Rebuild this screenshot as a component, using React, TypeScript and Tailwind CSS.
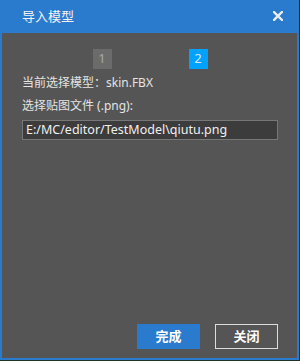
const font = { fontFamily: '"Microsoft YaHei", "Noto Sans", "Noto Sans CJK SC", sans-serif' };

const App = () => {
  return (
    <div className="w-[300px] h-[361px] bg-[#1e3326]" style={font}>
      <div className="w-[299px] h-[360px] flex flex-col border-2 border-t-0 border-[#2a7bcd] bg-[#555555]">
        <div className="h-[33px] -mx-[2px] flex items-center justify-between bg-[#2a7bcd] pl-[22px] pr-[16px] text-white">
          <span className="text-[13px] leading-none text-[#f2f2f2]">导入模型</span>
          <svg width="10" height="10" viewBox="0 0 10 10" className="mb-[2px]">
            <path d="M1 1 L9 9 M9 1 L1 9" stroke="#eeeeee" strokeWidth="2.4" strokeLinecap="square" />
          </svg>
        </div>

        <div className="flex-1 flex flex-col pl-[20px] pr-[19px] pt-[16px] pb-[9px]">
          <div className="flex justify-center gap-[77px]">
            <div className="w-[19px] h-[20px] flex items-center justify-center bg-[#6b6b6b] text-[13px] text-[#a8a8a8]">
              1
            </div>
            <div className="w-[19px] h-[20px] flex items-center justify-center bg-[#00a2ff] text-[13px] text-[#dde8f5]">
              2
            </div>
          </div>

          <p className="mt-[4px] h-[20px] leading-[20px] text-[12px] text-[#e4e4e4]">当前选择模型：skin.FBX</p>
          <p className="mt-[3px] h-[20px] leading-[20px] text-[12px] text-[#e4e4e4]">选择贴图文件 (.png):</p>

          <div className="mt-[4px] w-[256px] h-[20px] flex items-center border border-[#777777] bg-[#3c3c3c] px-[3px] text-[12.5px] text-[#f0f0f0]">
            E:/MC/editor/TestModel\qiutu.png
          </div>

          <div className="mt-auto flex justify-end gap-[15px]">
            <button className="w-[63px] h-[25px] flex items-center justify-center bg-[#2a7bcd] text-[13px] font-bold text-white">
              完成
            </button>
            <button className="w-[63px] h-[25px] flex items-center justify-center border border-[#dddddd] text-[13px] font-bold text-white">
              关闭
            </button>
          </div>
        </div>
      </div>
    </div>
  );
};

export default App;
